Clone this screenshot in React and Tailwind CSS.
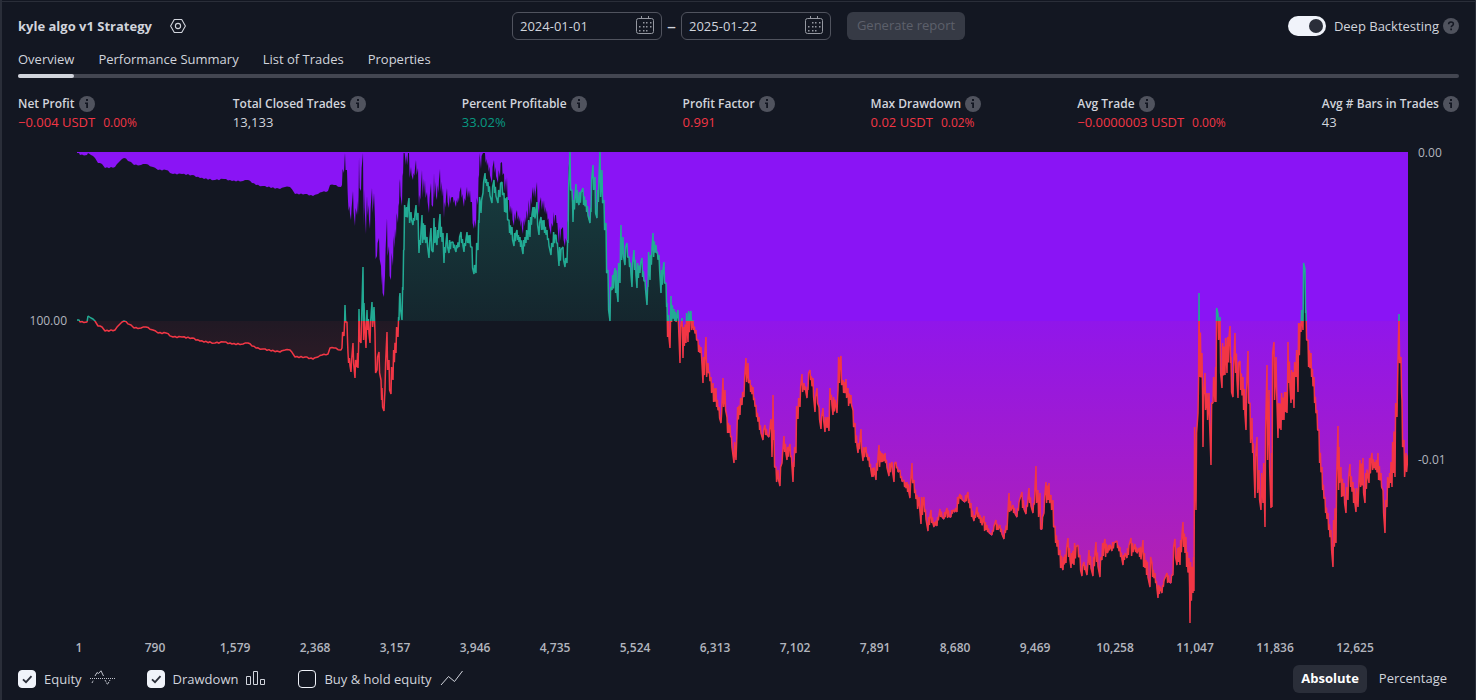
import { useMemo, useState } from 'react';

const CHART_WIDTH = 1331;
const CHART_HEIGHT = 484;
const BASELINE = 169;
const ORIGIN = { x: 77, y: 152 };

const TABS = ['Overview', 'Performance Summary', 'List of Trades', 'Properties'];

const STATS = [
  { label: 'Net Profit', value: '−0.004 USDT', percent: '0.00%', tone: 'loss' },
  { label: 'Total Closed Trades', value: '13,133', tone: 'neutral' },
  { label: 'Percent Profitable', value: '33.02%', tone: 'gain' },
  { label: 'Profit Factor', value: '0.991', tone: 'loss' },
  { label: 'Max Drawdown', value: '0.02 USDT', percent: '0.02%', tone: 'loss' },
  { label: 'Avg Trade', value: '−0.0000003 USDT', percent: '0.00%', tone: 'loss' },
  { label: 'Avg # Bars in Trades', value: '43', tone: 'neutral' },
];

const TONES = {
  loss: 'text-[#f23645]',
  gain: 'text-[#089981]',
  neutral: 'text-[#d1d4dc]',
};

const TRADE_TICKS = [
  '1', '790', '1,579', '2,368', '3,157', '3,946', '4,735', '5,524', '6,313',
  '7,102', '7,891', '8,680', '9,469', '10,258', '11,047', '11,836', '12,625',
];

// Opening stretch of the equity curve: x, y
const QUIET = [
  77, 320, 79, 320, 80, 322, 87, 322, 88, 316, 91, 318, 95, 321, 98, 326, 102, 327, 105, 331,
  115, 330, 120, 324, 124, 321, 131, 325, 134, 328, 141, 328, 146, 327, 153, 330, 158, 333,
  166, 333, 173, 337, 182, 337, 192, 338, 200, 341, 215, 343, 224, 342, 232, 344, 243, 344,
  248, 343, 256, 348, 263, 349, 280, 352, 285, 350, 290, 350, 295, 357, 305, 357, 313, 359,
  318, 357, 322, 355, 328, 354, 330, 348, 334, 348, 341, 350,
];

// The rest of the curve, as the range it covers in each column: x, high, low
const RANGES = [
  342, 332, 348, 344, 322, 336, 345, 305, 322, 347, 322, 343, 348, 353, 363, 351, 360, 372,
  353, 343, 363, 355, 360, 378, 357, 353, 367, 358, 347, 368, 359, 309, 340, 361, 320, 343,
  363, 267, 340, 364, 303, 322, 366, 320, 348, 367, 310, 330, 370, 322, 343, 372, 302, 327,
  374, 307, 322, 375, 333, 373, 377, 357, 370, 379, 352, 373, 381, 380, 400, 382, 388, 407,
  384, 397, 411, 385, 363, 390, 387, 332, 370, 389, 360, 390, 391, 367, 394, 393, 350, 380,
  396, 327, 353, 398, 317, 337, 399, 297, 320, 400, 293, 310, 402, 287, 320, 403, 250, 290,
  404, 205, 250, 406, 207, 217, 409, 198, 223, 411, 212, 220, 413, 218, 225, 416, 205, 220,
  418, 213, 240, 419, 240, 253, 422, 215, 243, 425, 225, 243, 427, 237, 247, 429, 243, 258,
  431, 228, 250, 433, 237, 252, 434, 218, 243, 437, 230, 245, 440, 214, 237, 443, 233, 253,
  444, 247, 263, 447, 233, 247, 449, 240, 253, 453, 242, 248, 456, 245, 252, 459, 237, 247,
  461, 232, 243, 464, 243, 252, 467, 232, 243, 470, 235, 247, 472, 247, 268, 474, 265, 274,
  476, 243, 273, 478, 220, 250, 479, 197, 223, 481, 200, 213, 483, 182, 193, 485, 173, 183,
  488, 182, 192, 492, 187, 203, 494, 180, 193, 498, 190, 203, 500, 183, 197, 502, 182, 195,
  504, 193, 212, 507, 197, 220, 509, 220, 233, 512, 227, 240, 514, 233, 246, 517, 230, 240,
  520, 237, 247, 523, 240, 254, 526, 230, 243, 528, 220, 240, 530, 217, 237, 533, 207, 217,
  537, 202, 225, 539, 223, 235, 541, 217, 230, 544, 220, 233, 547, 230, 240, 551, 243, 255,
  553, 232, 247, 556, 235, 243, 559, 247, 266, 563, 247, 260, 565, 258, 267, 567, 240, 263,
  568, 188, 243, 570, 152, 190, 572, 190, 203, 573, 200, 222, 576, 184, 203, 579, 192, 205,
  583, 188, 205, 586, 200, 212, 590, 208, 223, 591, 180, 212, 593, 165, 190, 595, 177, 213,
  597, 190, 218, 600, 152, 197, 602, 170, 203, 604, 200, 230, 606, 223, 273, 608, 270, 310,
  610, 287, 321, 612, 275, 290, 615, 268, 293, 618, 263, 302, 620, 240, 283, 621, 225, 260,
  623, 237, 257, 625, 247, 265, 627, 243, 257, 629, 257, 267, 632, 263, 287, 634, 250, 270,
  637, 263, 288, 640, 263, 273, 642, 258, 277, 645, 280, 290, 647, 287, 305, 648, 252, 287,
  650, 255, 280, 653, 233, 257, 656, 245, 253, 659, 255, 270, 661, 270, 293, 664, 262, 283,
  666, 283, 307, 667, 303, 337, 670, 317, 348, 671, 296, 322, 674, 309, 321, 678, 310, 327,
  680, 327, 363, 682, 318, 340, 683, 327, 358, 686, 313, 343, 688, 311, 342, 691, 311, 330,
  693, 320, 330, 696, 330, 340, 698, 340, 352, 701, 347, 357, 703, 357, 383, 706, 337, 377,
  708, 363, 373, 711, 377, 393, 713, 383, 402, 716, 388, 407, 719, 407, 418, 721, 413, 423,
  723, 378, 407, 725, 390, 410, 727, 417, 433, 730, 425, 437, 734, 442, 463, 736, 443, 460,
  737, 407, 430, 740, 398, 415, 742, 392, 405, 744, 378, 397, 746, 358, 382, 748, 363, 383,
  750, 380, 392, 753, 387, 400, 756, 405, 417, 759, 417, 430, 763, 430, 440, 765, 425, 435,
  769, 430, 437, 771, 419, 437, 772, 430, 457, 773, 395, 440, 774, 430, 467, 776, 467, 482,
  778, 470, 480, 780, 467, 486, 782, 453, 463, 784, 436, 452, 787, 447, 460, 790, 444, 457,
  793, 462, 482, 794, 447, 467, 796, 406, 453, 798, 398, 419, 800, 387, 407, 802, 374, 392,
  804, 383, 390, 807, 387, 398, 808, 373, 390, 810, 370, 380, 813, 378, 397, 815, 397, 412,
  817, 388, 403, 819, 407, 420, 821, 417, 429, 823, 408, 420, 825, 417, 432, 827, 417, 428,
  829, 400, 431, 830, 388, 400, 833, 397, 415, 837, 397, 413, 838, 357, 390, 841, 356, 385,
  843, 380, 393, 846, 379, 398, 848, 388, 406, 851, 395, 405, 853, 410, 427, 855, 423, 443,
  858, 443, 453, 861, 429, 450, 863, 447, 461, 866, 447, 457, 869, 457, 467, 872, 468, 477,
  876, 463, 480, 879, 445, 467, 882, 453, 462, 885, 453, 463, 889, 463, 476, 892, 462, 472,
  894, 463, 482, 896, 462, 468, 900, 470, 478, 904, 480, 487, 907, 482, 492, 910, 483, 498,
  912, 463, 483, 914, 480, 493, 917, 495, 509, 919, 497, 507, 921, 497, 524, 924, 497, 512,
  928, 517, 531, 931, 510, 523, 934, 522, 527, 937, 517, 526, 940, 509, 517, 944, 512, 519,
  947, 508, 518, 951, 510, 517, 955, 508, 512, 957, 497, 512, 960, 494, 499, 965, 495, 502,
  968, 492, 503, 971, 503, 517, 974, 515, 521, 977, 507, 517, 980, 515, 523, 984, 516, 531,
  987, 525, 532, 992, 530, 535, 996, 520, 530, 1000, 525, 532, 1004, 530, 539, 1007, 518, 530,
  1009, 493, 512, 1013, 505, 513, 1017, 508, 517, 1022, 492, 508, 1026, 505, 514, 1029, 488, 503,
  1033, 503, 513, 1036, 466, 503, 1038, 490, 517, 1040, 493, 529, 1042, 517, 529, 1044, 497, 513,
  1046, 482, 503, 1049, 483, 503, 1051, 495, 510, 1053, 500, 527, 1055, 526, 543, 1058, 540, 555,
  1060, 550, 568, 1063, 557, 570, 1066, 548, 563, 1068, 538, 557, 1071, 553, 568, 1074, 543, 565,
  1078, 545, 557, 1080, 555, 570, 1082, 566, 576, 1084, 562, 570, 1087, 567, 575, 1089, 550, 565,
  1093, 557, 576, 1096, 542, 562, 1100, 557, 577, 1102, 543, 560, 1105, 539, 557, 1108, 545, 552,
  1112, 542, 551, 1117, 541, 548, 1120, 547, 557, 1123, 555, 565, 1127, 548, 558, 1131, 538, 556,
  1135, 544, 552, 1139, 548, 557, 1143, 540, 567, 1146, 560, 575, 1150, 557, 587, 1152, 563, 577,
  1155, 573, 583, 1158, 585, 598, 1162, 585, 593, 1167, 573, 583, 1171, 575, 583, 1173, 547, 575,
  1175, 539, 557, 1177, 548, 565, 1180, 540, 565, 1183, 522, 547, 1186, 537, 567, 1189, 558, 587,
  1190, 562, 623, 1193, 557, 593, 1194, 427, 591, 1196, 433, 510, 1198, 377, 413, 1199, 293, 377,
  1202, 353, 397, 1203, 397, 447, 1205, 373, 410, 1207, 393, 420, 1209, 393, 423, 1211, 403, 465,
  1213, 377, 403, 1215, 367, 402, 1216, 308, 402, 1218, 314, 340, 1220, 317, 373, 1222, 343, 388,
  1225, 338, 375, 1227, 337, 373, 1230, 326, 363, 1231, 357, 392, 1233, 367, 397, 1235, 333, 373,
  1238, 363, 398, 1240, 361, 390, 1243, 377, 410, 1246, 390, 430, 1248, 351, 403, 1250, 403, 443,
  1252, 418, 453, 1255, 457, 498, 1257, 437, 493, 1259, 470, 500, 1261, 473, 510, 1263, 463, 503,
  1265, 430, 527, 1267, 365, 460, 1269, 390, 467, 1271, 453, 508, 1272, 353, 507, 1274, 342, 400,
  1276, 357, 390, 1278, 403, 438, 1281, 393, 430, 1284, 392, 420, 1287, 383, 413, 1288, 342, 383,
  1291, 370, 403, 1294, 362, 408, 1296, 350, 377, 1298, 323, 392, 1301, 310, 332, 1303, 263, 330,
  1305, 269, 313, 1306, 310, 340, 1308, 340, 367, 1311, 353, 377, 1314, 377, 403, 1317, 410, 430,
  1319, 430, 463, 1322, 467, 490, 1325, 497, 513, 1328, 513, 530, 1331, 530, 550, 1333, 520, 567,
  1336, 480, 543, 1338, 426, 490, 1339, 447, 483, 1341, 467, 497, 1344, 483, 503, 1346, 487, 513,
  1348, 477, 500, 1350, 464, 487, 1353, 482, 503, 1356, 488, 512, 1358, 490, 507, 1360, 460, 487,
  1363, 458, 493, 1365, 473, 503, 1369, 458, 483, 1372, 453, 470, 1375, 462, 470, 1378, 453, 480,
  1381, 473, 487, 1383, 490, 513, 1385, 500, 533, 1387, 477, 507, 1389, 473, 488, 1392, 442, 487,
  1395, 403, 477, 1397, 380, 417, 1399, 314, 363, 1401, 357, 393, 1402, 400, 447, 1404, 440, 477,
  1406, 453, 472,
];

function buildEquity() {
  const points = [];
  for (let i = 0; i < QUIET.length; i += 2) {
    points.push([QUIET[i], QUIET[i + 1]]);
    // small ripple between the quiet points
    if (i + 2 < QUIET.length) {
      const gap = QUIET[i + 2] - QUIET[i];
      for (let step = 2; step < gap - 1; step += 2) {
        const y = QUIET[i + 1] + ((QUIET[i + 3] - QUIET[i + 1]) * step) / gap;
        points.push([QUIET[i] + step, y + (step % 4 === 0 ? 0.6 : -0.5)]);
      }
    }
  }
  for (let i = 0; i < RANGES.length; i += 3) {
    const [x, high, low, nextX, nextHigh, nextLow] = RANGES.slice(i, i + 6);
    const rising = nextHigh !== undefined && nextHigh + nextLow < high + low;
    const pair = rising ? [low, high] : [high, low];
    points.push([x, pair[0]], [x + 0.6, pair[1]]);
    if (nextX - x > 2) {
      const midHigh = (high + nextHigh) / 2;
      const midLow = (low + nextLow) / 2;
      const inset = (midLow - midHigh) * 0.15;
      points.push([x + 1.4, rising ? midLow - inset : midHigh + inset]);
      points.push([x + 2, rising ? midHigh + inset : midLow - inset]);
    }
  }
  points.push([1408, 455]);
  return points.map(([x, y]) => [x - ORIGIN.x, y - ORIGIN.y]);
}

const toPath = (points) => 'M' + points.map(([x, y]) => `${x.toFixed(1)} ${y.toFixed(1)}`).join('L');

function EquityChart({ showEquity, showDrawdown }) {
  const { line, area, drawdown } = useMemo(() => {
    const equity = buildEquity();
    let peak = Infinity;
    const fall = equity.map(([x, y]) => {
      peak = Math.min(peak, y);
      return [x, y - peak + 1];
    });
    const linePath = toPath(equity);
    return {
      line: linePath,
      area: `${linePath}V${BASELINE}H0Z`,
      drawdown: `${toPath(fall)}V0H0Z`,
    };
  }, []);

  return (
    <svg
      viewBox={`0 0 ${CHART_WIDTH} ${CHART_HEIGHT}`}
      preserveAspectRatio="none"
      className="block h-[484px] w-full"
      role="img"
      aria-label="Equity and drawdown by trade"
    >
      <defs>
        <linearGradient id="equityLine" gradientUnits="userSpaceOnUse" x1="0" y1="0" x2="0" y2={CHART_HEIGHT}>
          <stop offset={BASELINE / CHART_HEIGHT} stopColor="#22ab94" />
          <stop offset={BASELINE / CHART_HEIGHT} stopColor="#f23645" />
        </linearGradient>
        <linearGradient id="equityArea" gradientUnits="userSpaceOnUse" x1="0" y1="0" x2="0" y2={CHART_HEIGHT}>
          <stop offset="0" stopColor="#22ab94" stopOpacity="0.28" />
          <stop offset={BASELINE / CHART_HEIGHT} stopColor="#22ab94" stopOpacity="0.1" />
          <stop offset={BASELINE / CHART_HEIGHT} stopColor="#f23645" stopOpacity="0.06" />
          <stop offset="1" stopColor="#f23645" stopOpacity="0.45" />
        </linearGradient>
      </defs>
      {showDrawdown && <path d={drawdown} fill="#8a14f5" />}
      {showEquity && <path d={area} fill="url(#equityArea)" />}
      {showEquity && (
        <path
          d={line}
          fill="none"
          stroke="url(#equityLine)"
          strokeWidth="1.5"
          strokeLinejoin="bevel"
          vectorEffect="non-scaling-stroke"
        />
      )}
    </svg>
  );
}

function InfoIcon() {
  return (
    <svg viewBox="0 0 16 16" className="size-4 shrink-0" aria-hidden="true">
      <circle cx="8" cy="8" r="8" fill="#50535e" />
      <path d="M7 3h2v2H7zM6 6.5h3V12H7.2V8H6z" fill="#131722" />
    </svg>
  );
}

function HelpIcon() {
  return (
    <svg viewBox="0 0 16 16" className="size-4 shrink-0" aria-hidden="true">
      <circle cx="8" cy="8" r="8" fill="#50535e" />
      <path d="M5.6 6.2c0-1.5 1-2.3 2.4-2.3s2.4.9 2.4 2.1c0 1.6-2.2 1.6-2.2 3.3" fill="none" stroke="#131722" strokeWidth="1.5" />
      <path d="M7.3 10.6h1.7v1.6H7.3z" fill="#131722" />
    </svg>
  );
}

function SettingsIcon() {
  return (
    <svg viewBox="0 0 16 16" className="size-4" fill="none" stroke="#d1d4dc" strokeWidth="1.1" aria-hidden="true">
      <path d="M4.3 1.5h7.4L15.4 8l-3.7 6.5H4.3L.6 8z" strokeLinejoin="round" />
      <circle cx="8" cy="8" r="2.6" />
    </svg>
  );
}

function CalendarIcon() {
  return (
    <svg viewBox="0 0 20 20" className="size-5 shrink-0" aria-hidden="true">
      <rect x="1.5" y="2.5" width="17" height="15" rx="2" fill="none" stroke="#9598a1" />
      <path d="M6.5 0v3M13.5 0v3" stroke="#9598a1" />
      <path
        d="M8 6h1.5v1.5H8zM11 6h1.5v1.5H11zM15 6h1.5v1.5H15zM4 10h1.5v1.5H4zM8 10h1.5v1.5H8zM11 10h1.5v1.5H11zM15 10h1.5v1.5H15zM4 14h1.5v1.5H4zM8 14h1.5v1.5H8zM11 14h1.5v1.5H11z"
        fill="#9598a1"
      />
    </svg>
  );
}

function EquityIcon() {
  return (
    <svg viewBox="0 0 25 18" className="h-[18px] w-[25px]" fill="none" stroke="#c1c4cd" aria-hidden="true">
      <path d="M0 8.5h25" strokeDasharray="1 1" />
      <path d="M5 6l2-3.500 1.500 1L11 .8 13.500 6" />
      <path d="M2 13l1.5-3M15 10l2.500 4.500L20 10" strokeDasharray="2 1" />
    </svg>
  );
}

function DrawdownIcon() {
  return (
    <svg viewBox="0 0 20 18" className="h-[18px] w-5" fill="none" stroke="#d1d4dc" aria-hidden="true">
      <path d="M.5 6.5h4v8h-4zM7.5 1.5h4v13h-4zM14.5 9.5h4v5h-4z" />
    </svg>
  );
}

function HoldIcon() {
  return (
    <svg viewBox="0 0 24 18" className="h-[18px] w-6" fill="none" stroke="#d1d4dc" aria-hidden="true">
      <path d="M1 15l7.5-8.500 6 5L22.500 1" />
    </svg>
  );
}

function DateField({ label, value, onChange }) {
  return (
    <label className="flex h-7 w-[150px] items-center rounded-md border border-[#50535e] pr-[6px] pl-[7px]">
      <input
        type="text"
        aria-label={label}
        value={value}
        onChange={(e) => onChange(e.target.value)}
        className="w-0 grow bg-transparent text-[13px] leading-5 text-[#d1d4dc] outline-none"
      />
      <CalendarIcon />
    </label>
  );
}

function SeriesToggle({ label, checked, onChange, children }) {
  return (
    <label className="flex items-center gap-2 text-[13px] leading-5">
      <span className="grid size-[18px] place-items-center">
        <input
          type="checkbox"
          checked={checked}
          onChange={(e) => onChange(e.target.checked)}
          className="col-start-1 row-start-1 size-[18px] appearance-none rounded border border-[#f0f3fa] checked:bg-[#f0f3fa]"
        />
        {checked && (
          <svg viewBox="0 0 18 18" className="pointer-events-none col-start-1 row-start-1 size-[18px]" aria-hidden="true">
            <path d="M5 9.3l3 2.9 5.5-6" fill="none" stroke="#2a2e39" strokeWidth="1.8" />
          </svg>
        )}
      </span>
      <span className="flex items-center gap-2">
        {label}
        {children}
      </span>
    </label>
  );
}

export default function App() {
  const [tab, setTab] = useState('Overview');
  const [from, setFrom] = useState('2024-01-01');
  const [to, setTo] = useState('2025-01-22');
  const [deep, setDeep] = useState(true);
  const [equity, setEquity] = useState(true);
  const [drawdown, setDrawdown] = useState(true);
  const [hold, setHold] = useState(false);
  const [unit, setUnit] = useState('Absolute');

  return (
    <div className="min-h-screen border-r border-l-2 border-[#2a2e39] bg-[#131722] pt-px font-['Open_Sans',sans-serif] font-medium text-[#d1d4dc]">
      <div className="border-t border-[#2a2e39] px-4 pt-[10px] pb-[7px]">
        <header className="grid grid-cols-[1fr_auto_1fr] items-center">
          <div className="flex items-center gap-[18px]">
            <h1 className="text-[13px] leading-5 font-bold">kyle algo v1 Strategy</h1>
            <button aria-label="Settings">
              <SettingsIcon />
            </button>
          </div>
          <div className="flex items-center">
            <DateField label="Start date" value={from} onChange={setFrom} />
            <span className="w-[19px] text-center text-[18px] leading-5">–</span>
            <DateField label="End date" value={to} onChange={setTo} />
            <button disabled className="ml-4 h-7 w-[118px] rounded-md bg-[#363a45] text-[13px] text-[#5d606b]">
              Generate report
            </button>
          </div>
          <div className="flex items-center justify-end gap-1">
            <label className="flex items-center gap-2 text-[13px] leading-5">
              <input
                type="checkbox"
                role="switch"
                checked={deep}
                onChange={(e) => setDeep(e.target.checked)}
                className="flex h-5 w-[38px] appearance-none items-center rounded-full bg-[#50535e] px-[3px] before:size-[14px] before:rounded-full before:bg-[#2a2e39] checked:justify-end checked:bg-[#f0f3fa]"
              />
              Deep Backtesting
            </label>
            <HelpIcon />
          </div>
        </header>

        <nav className="mt-[9px]">
          <div className="flex gap-6">
            {TABS.map((name) => (
              <button key={name} onClick={() => setTab(name)} className="flex flex-col text-[13px] leading-5">
                {name}
                <span className={`relative mt-[5px] -mb-1 h-1 w-full rounded-sm ${tab === name ? 'bg-[#d1d4dc]' : ''}`} />
              </button>
            ))}
          </div>
          <div className="h-1 rounded-sm bg-[#434651]" />
        </nav>

        <dl className="mt-[18px] flex justify-between">
          {STATS.map((stat) => (
            <div key={stat.label}>
              <dt className="flex items-center gap-1 text-[12px] leading-4 font-semibold">
                {stat.label}
                <InfoIcon />
              </dt>
              <dd className={`flex items-baseline gap-2 text-[13px] leading-5 ${TONES[stat.tone]}`}>
                {stat.value}
                {stat.percent && <span className="text-[12px]">{stat.percent}</span>}
              </dd>
            </div>
          ))}
        </dl>

        <div className="mt-[19px] flex text-[12px] leading-4 text-[#b2b5be]">
          <div className="w-[59px] shrink-0 pt-[161px] pr-[10px] text-right">100.00</div>
          <div className="min-w-0 grow">
            <EquityChart showEquity={equity} showDrawdown={drawdown} />
          </div>
          <div className="flex w-[51px] shrink-0 flex-col gap-[291px] pl-[10px]">
            <span className="-mt-[7px]">0.00</span>
            <span>-0.01</span>
          </div>
        </div>
        <div className="mr-16 ml-[17px] grid grid-cols-17 text-center text-[12px] leading-6 font-semibold text-[#b2b5be]">
          {TRADE_TICKS.map((tick) => (
            <span key={tick} className={tick === '1' ? 'pl-2' : ''}>
              {tick}
            </span>
          ))}
        </div>

        <footer className="mt-[5px] flex items-center justify-between">
          <div className="flex items-center gap-8">
            <SeriesToggle label="Equity" checked={equity} onChange={setEquity}>
              <EquityIcon />
            </SeriesToggle>
            <SeriesToggle label="Drawdown" checked={drawdown} onChange={setDrawdown}>
              <DrawdownIcon />
            </SeriesToggle>
            <SeriesToggle label="Buy & hold equity" checked={hold} onChange={setHold}>
              <HoldIcon />
            </SeriesToggle>
          </div>
          <div className="flex">
            {['Absolute', 'Percentage'].map((name) => (
              <button
                key={name}
                onClick={() => setUnit(name)}
                className={`h-7 rounded-md text-[13px] ${unit === name ? 'bg-[#2a2e39] px-2 font-bold text-white' : 'px-3'}`}
              >
                {name}
              </button>
            ))}
          </div>
        </footer>
      </div>
    </div>
  );
}
